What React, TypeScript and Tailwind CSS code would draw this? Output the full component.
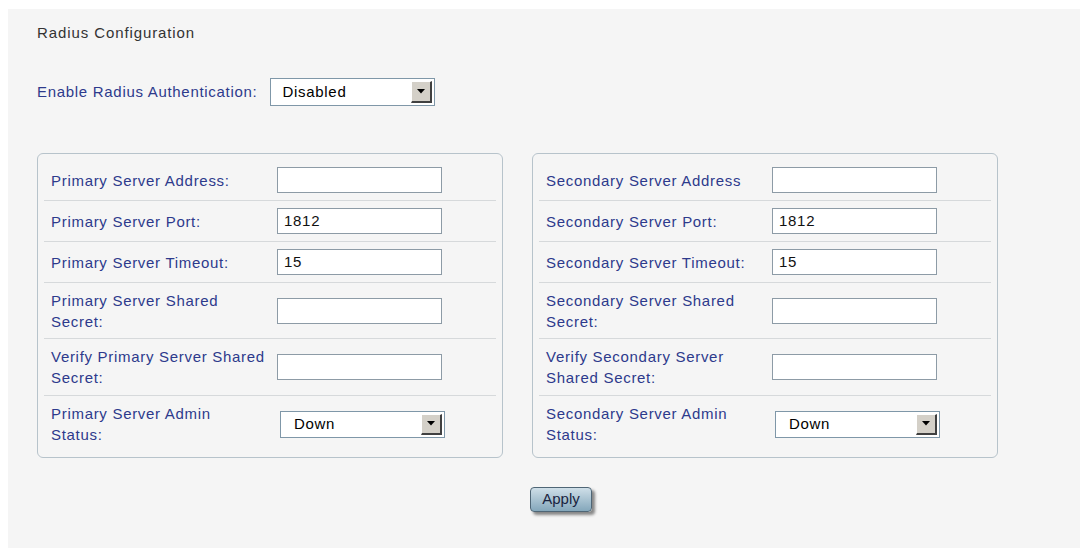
import React from 'react';

type Field = {
  lines: string[];
  kind: 'text' | 'select';
  value?: string;
  h: number;
};

const primaryFields: Field[] = [
  { lines: ['Primary Server Address:'], kind: 'text', h: 41 },
  { lines: ['Primary Server Port:'], kind: 'text', value: '1812', h: 41 },
  { lines: ['Primary Server Timeout:'], kind: 'text', value: '15', h: 41 },
  { lines: ['Primary Server Shared', 'Secret:'], kind: 'text', h: 56 },
  { lines: ['Verify Primary Server Shared', 'Secret:'], kind: 'text', h: 57 },
  { lines: ['Primary Server Admin', 'Status:'], kind: 'select', value: 'Down', h: 56 },
];

const secondaryFields: Field[] = [
  { lines: ['Secondary Server Address'], kind: 'text', h: 41 },
  { lines: ['Secondary Server Port:'], kind: 'text', value: '1812', h: 41 },
  { lines: ['Secondary Server Timeout:'], kind: 'text', value: '15', h: 41 },
  { lines: ['Secondary Server Shared', 'Secret:'], kind: 'text', h: 56 },
  { lines: ['Verify Secondary Server', 'Shared Secret:'], kind: 'text', h: 57 },
  { lines: ['Secondary Server Admin', 'Status:'], kind: 'select', value: 'Down', h: 56 },
];

// Classic Windows-style dropdown: white box with a bevelled grey arrow button
const ClassicSelect: React.FC<{ value: string; className?: string; textPad?: string }> = ({
  value,
  className = '',
  textPad = 'pl-[11px]',
}) => (
  <div className={`flex items-stretch bg-white border border-[#7f97a8] p-[2px] ${className}`}>
    <span className={`flex-1 flex items-center text-[15px] text-black ${textPad}`}>{value}</span>
    <span className="w-[21px] flex items-center justify-center bg-[#d4d0c8] border-t border-l border-t-white border-l-white border-r-2 border-b-2 border-r-[#404040] border-b-[#404040]">
      <svg width="8" height="5" viewBox="0 0 8 5">
        <path d="M0 0h8L4 4.5z" fill="#000" />
      </svg>
    </span>
  </div>
);

const TextInput: React.FC<{ value?: string }> = ({ value }) => (
  <div className="w-[165px] h-[26px] bg-white border border-[#8d9ba6] flex items-center pl-[6px] text-[15px] text-[#111]">
    {value}
  </div>
);

const ServerPanel: React.FC<{ fields: Field[] }> = ({ fields }) => (
  <div className="w-[466px] h-[305px] border border-[#b7c3cb] rounded-[6px] px-[6px] pt-[6px]">
    {fields.map((f, i) => (
      <div
        key={f.lines.join(' ')}
        className={`flex items-center pl-[7px] ${i < fields.length - 1 ? 'border-b border-[#d6d9db]' : ''}`}
        style={{ height: f.h }}
      >
        <div className="w-[226px] pr-[8px] text-[15px] leading-[21px] text-[#2d3a8c] whitespace-nowrap">
          {f.lines.map((l) => (
            <div key={l}>{l}</div>
          ))}
        </div>
        {f.kind === 'text' ? (
          <TextInput value={f.value} />
        ) : (
          <ClassicSelect value={f.value ?? ''} className="w-[165px] h-[27px] ml-[3px]" />
        )}
      </div>
    ))}
  </div>
);

export default function App() {
  return (
    <div
      className="min-h-screen bg-white pt-[9px] pl-[8px] tracking-[0.7px]"
      style={{ fontFamily: '"Liberation Sans", Arial, sans-serif' }}
    >
      <div className="h-[539px] bg-[#f5f5f5] pl-[29px] pt-[15px]">
        <div className="text-[15px] leading-[18px] text-[#333] tracking-[0.9px]">Radius Configuration</div>

        <div className="flex items-center mt-[36px]">
          <span className="text-[15px] text-[#2d3a8c] mr-[13px]">Enable Radius Authentication:</span>
          <ClassicSelect value="Disabled" className="w-[165px] h-[28px]" textPad="pl-[9px]" />
        </div>

        <div className="flex gap-[29px] mt-[47px]">
          <ServerPanel fields={primaryFields} />
          <ServerPanel fields={secondaryFields} />
        </div>

        <div className="pl-[493px] mt-[29px]">
          <button className="w-[62px] h-[25px] rounded-[4px] border border-[#4f6676] bg-gradient-to-b from-[#cfdfe8] to-[#84a7bb] text-[15px] text-[#1a2440] shadow-[3px_3px_3px_rgba(0,0,0,0.45)] tracking-normal">
            Apply
          </button>
        </div>
      </div>
    </div>
  );
}
